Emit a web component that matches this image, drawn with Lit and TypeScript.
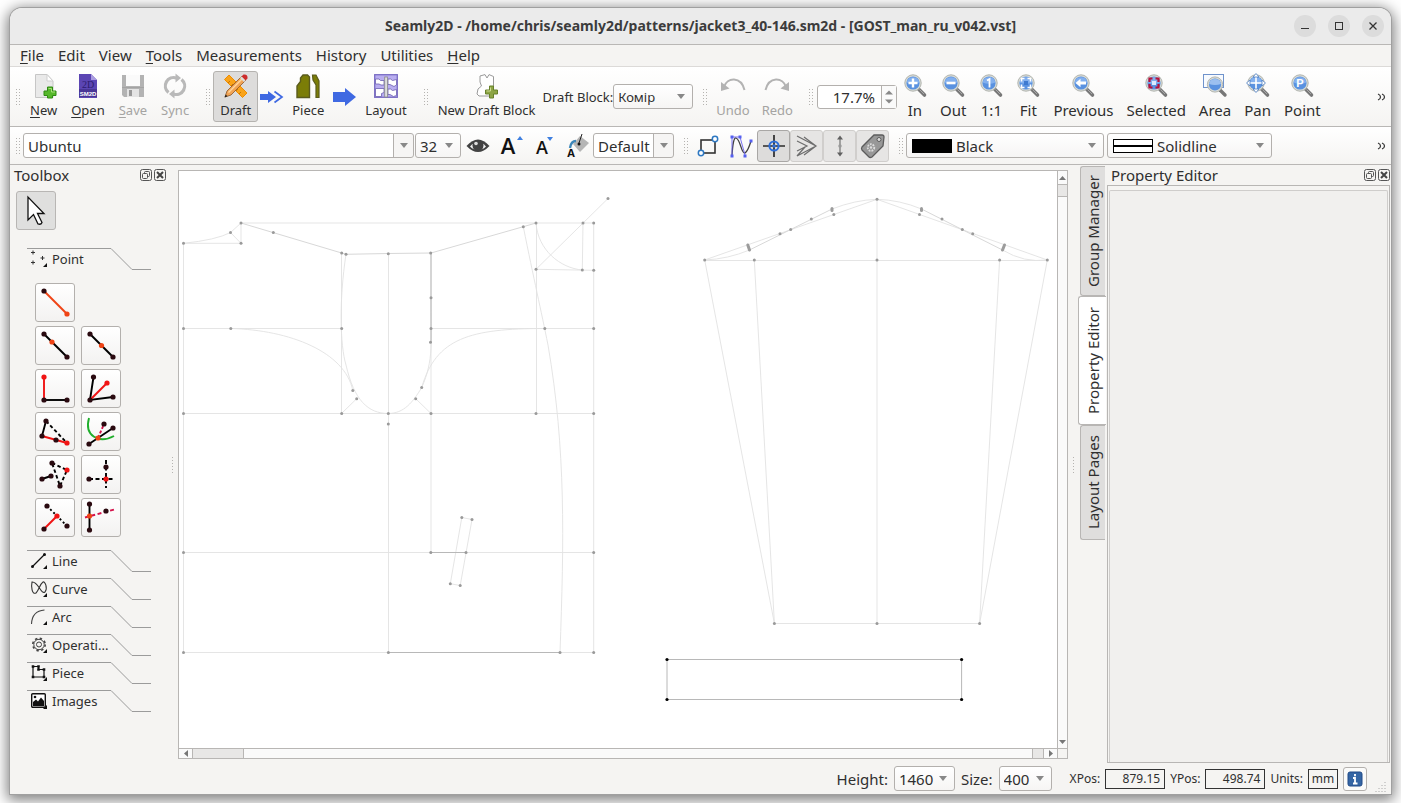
import { LitElement, html, svg, css, TemplateResult } from "lit";
import { customElement, state } from "lit/decorators.js";

type Glyph = TemplateResult;
interface Tool { label: string; icon: Glyph; key?: boolean; off?: boolean; on?: boolean }

const icon = (body: Glyph, size = 24) =>
  html`<svg class="icon" width=${size} height=${size} viewBox="0 0 ${size} ${size}" aria-hidden="true">${body}</svg>`;

/* ---------- toolbar glyphs ---------- */
const lensHandle = svg`
  <path d="M15.5 15 L21.5 21" stroke="#777" stroke-width="3.6" stroke-linecap="round"/>
  <path d="M16.5 15.5 L21 20" stroke="#a8a8a8" stroke-width="1"/>`;
const lens = (mark: Glyph) => icon(svg`
  ${lensHandle}
  <circle cx="10" cy="9" r="8.2" fill="#d9dcd6" stroke="#b2b5b0"/>
  <circle cx="10" cy="9" r="6.6" fill="#5a92e0"/>
  <path d="M3.6 8.5 a6.5 6.5 0 0 1 12.8 0 q-6.4 2.5 -12.8 0z" fill="#83b0ee"/>
  ${mark}`);

const newIcon = icon(svg`
  <path d="M3.500 .5 H15 L21 7 V23.500 H3.500z" fill="#e9e9e9" stroke="#c6c6c6"/>
  <path d="M15 .5 V7 H21z" fill="#fff" stroke="#cfcfcf"/>
  <path d="M15.500 13 h5 v4 h3.500 v4.500 h-3.500 v2.500 h-5 v-2.500 h-3.500 v-4.500 h3.500z" fill="#56b82a" stroke="#2f8a12"/>
  <path d="M16.500 14.500 h3 v3.500 h3.500" fill="none" stroke="#a5e079"/>`);
const openIcon = icon(svg`
  <path d="M3 0 H15 L21 6 V24 H3z" fill="#5b45b3"/>
  <path d="M15 0 V6 H21z" fill="#a99be0"/>
  <rect x="3" y="15" width="18" height="8" fill="#493696"/>
  <text x="12" y="14" text-anchor="middle" font-family="Liberation Serif, serif" font-size="10" fill="#2c1d70">2D</text>
  <text x="12" y="22" text-anchor="middle" font-family="Liberation Sans, sans-serif" font-weight="700" font-size="6" fill="#fff">SM2D</text>`);
const saveIcon = icon(svg`
  <path d="M1 1 H23 V23 H3 L1 21z" fill="#b3b3b3"/>
  <rect x="5" y="1" width="14" height="11" fill="#fafafa"/>
  <rect x="6" y="15" width="12" height="8" fill="#e4e4e4"/><rect x="8" y="16" width="3" height="6" fill="#999"/>
  <path d="M1 13.500 h22" stroke="#a3a3a3"/>`);
const syncIcon = icon(svg`
  <path d="M5.500 18.500 A8.400 8.400 0 0 1 13.500 4" fill="none" stroke="#b9b9b9" stroke-width="3.200"/>
  <path d="M18.500 5.500 A8.400 8.400 0 0 1 10.500 20" fill="none" stroke="#b9b9b9" stroke-width="3.200"/>
  <path d="M12.500 -.5 L18 4 L12.500 8.500z M11.500 24.500 L6 20 L11.500 15.500z" fill="#b9b9b9"/>`);
const draftIcon = icon(svg`
  <path d="M5 1 L23 19 L18.500 23.500 L.5 5.500z" fill="#f9a31a" stroke="#ee8d00"/>
  <path d="M4 9 l2 -2 M7 12 l2 -2 M12 17 l2 -2 M15 20 l2 -2" stroke="#b96d00" stroke-width=".8"/>
  <path d="M1 23 L3 17 L18 2 L22 6 L7 21z" fill="#f0a355" stroke="#8b5526" stroke-width=".8"/>
  <path d="M4.500 18.500 L19 4" stroke="#ffd79e" stroke-width="1.500"/>
  <path d="M17.500 2.500 L19.500 .5 Q24 0 23.500 4.500 L21.500 6.500z" fill="#cc2b2b"/>
  <path d="M16 4 l1.500-1.500 l4 4 L20 8z" fill="#dcdcdc"/>
  <path d="M.5 23.500 L1.700 20.500 L3.500 22.300z" fill="#222"/>`);
const pieceIcon = icon(svg`
  <path d="M1 23.500 V12 L4.500 7.500 V4 L7 1 H11.500 L13.500 3 V23.500z" fill="#7b7d07" stroke="#5a5b1d" stroke-width="1.400"/>
  <path d="M16.500 1 H20 L23 7 V23.500 H20 V11 L17 6z" fill="#7b7d07" stroke="#5a5b1d" stroke-width="1.200"/>`);
const layoutIcon = icon(svg`
  <rect x=".7" y=".7" width="22.600" height="22.600" fill="#b9aef0" stroke="#7a6dc4" stroke-width="1.300"/>
  <path d="M1.500 5 H5 L6.500 6.500 H10 V11 H7 L5 10 H1.500z M1.500 14.500 H10 V18.500 L7.500 19.500 V22.500 H1.500z M14 5 H16.500 L18.500 6.500 L22.500 5.500 V11 L20 12.500 L16 10.500 H14z M14 15 H16.500 L18.500 16.500 L22.500 15.500 V21.500 L19.500 22.500 L16 20.500 H14z" fill="#fff" stroke="#6c5fb0" stroke-width=".8"/>
  <rect x="10.700" y="3" width="2.800" height="20" fill="#ddd" stroke="#888" stroke-width=".8"/>`);
const blockIcon = icon(svg`
  <path d="M5 2 L10 .6 L12 4 L14 .6 L18.500 2.500 L18.500 13 V22 L4 22 L2 20 L3 15 L6.500 12 L5 8z" fill="#fff" stroke="#9a9a9a"/>
  <path d="M14.500 12 h4 v4 h4 v4 h-4 v4 h-4 v-4 h-4 v-4 h4z" fill="#8da545" stroke="#66802a"/>
  <path d="M15.500 13.500 v3.500 h-4" fill="none" stroke="#cddc94"/>`);
const undoIcon = icon(svg`
  <path d="M3 13 C6 3 20 2 23.500 16" fill="none" stroke="#b3b3b3" stroke-width="2"/>
  <path d="M0 8 V17 L8.500 14.500z" fill="#b3b3b3"/>`);
const redoIcon = icon(svg`
  <path d="M21 13 C18 3 4 2 .5 16" fill="none" stroke="#b3b3b3" stroke-width="2"/>
  <path d="M24 8 V17 L15.500 14.500z" fill="#b3b3b3"/>`);

const zoomTools: Tool[] = [
  { label: "In", icon: lens(svg`<path d="M10 4.500 v9 M5.500 9 h9" stroke="#fff" stroke-width="2.400"/>`) },
  { label: "Out", icon: lens(svg`<path d="M5.500 9 h9" stroke="#fff" stroke-width="2.600"/>`) },
  { label: "1:1", icon: lens(svg`<path d="M8 6.500 l2.500 -1.500 v8.500" fill="none" stroke="#fff" stroke-width="1.800"/>`) },
  { label: "Fit", icon: lens(svg`<path d="M5.500 7.500 V4.500 h3 M11.500 4.500 h3 v3 M14.500 10.500 v3 h-3 M8.500 13.500 h-3 v-3" fill="none" stroke="#fff" stroke-width="1.600"/><rect x="8" y="7" width="4" height="4" fill="#3f7ad0"/>`) },
  { label: "Previous", icon: lens(svg`<path d="M4.500 9 L9.500 4.800 V7.500 H15 v3 H9.500 V13.200z" fill="#fff"/>`) },
  { label: "Selected", icon: lens(svg`<path d="M5.500 8 V4.500 h3 M11.500 4.500 h3 V8 M14.500 10 v3.500 h-3 M8.500 13.500 h-3 V10" fill="none" stroke="#b8123a" stroke-width="2.200"/><rect x="8" y="7" width="4" height="4" fill="#dcebff"/>`) },
  { label: "Area", icon: icon(svg`
      <rect x=".5" y=".5" width="20" height="13" fill="#f7fafe" stroke="#6f93cc"/>
      <path d="M17 16 L22 21" stroke="#777" stroke-width="3.400" stroke-linecap="round"/>
      <circle cx="12" cy="10.500" r="7.600" fill="#d9dcd6" stroke="#b2b5b0"/><circle cx="12" cy="10.500" r="6.100" fill="#5a92e0"/>
      <path d="M6 10 a6.100 6.100 0 0 1 12 0 q-6 2 -12 0z" fill="#9cc0f0"/>`) },
  { label: "Pan", icon: lens(svg`<path d="M10 1 v16 M2 9 h16" stroke="#fff" stroke-width="1.600"/><path d="M10 -.5 l3 3.500 h-6z M10 18.500 l3 -3.500 h-6z M.5 9 l3.500 -3 v6z M19.500 9 l-3.500 -3 v6z" fill="#fff" stroke="#4d7fc4" stroke-width=".8"/>`) },
  { label: "Point", icon: lens(svg`<text x="10" y="13" text-anchor="middle" font-family="Liberation Sans, sans-serif" font-weight="700" font-size="11" fill="#fff">P</text>`) },
];

const textTools: Tool[] = [
  { label: "Show point names", icon: icon(svg`
      <path d="M.5 12 Q12 -1 23.500 12 Q12 24 .5 12z" fill="#424242"/><path d="M4 12.500 Q12 3 20 12.500 Q12 20 4 12.500z" fill="#f6f6f6"/>
      <circle cx="12" cy="11.500" r="5.500" fill="#424242"/><circle cx="10" cy="9.500" r="1.800" fill="#ddd"/>`) },
  { label: "Increase text size", icon: icon(svg`
      <text x="9" y="20" text-anchor="middle" font-family="Open Sans, sans-serif" font-weight="600" font-size="22" fill="#111">A</text>
      <path d="M18 6 h6 l-3 -4z" fill="#3f7fe0"/>`) },
  { label: "Decrease text size", icon: icon(svg`
      <text x="10" y="20" text-anchor="middle" font-family="Open Sans, sans-serif" font-weight="600" font-size="18" fill="#111">A</text>
      <path d="M15 3 h6 l-3 4z" fill="#3f7fe0"/>`) },
  { label: "Text colour", icon: icon(svg`
      <path d="M8 10 L15 2 L24 9 L15 18z" fill="#b5b5b5"/><path d="M17 0 L14 9" stroke="#222"/><circle cx="14" cy="10" r="1.500" fill="#111"/>
      <path d="M11 7 Q6 7 5 14" fill="none" stroke="#3c86b9" stroke-width="2.400"/>
      <text x="6" y="23" text-anchor="middle" font-family="Open Sans, sans-serif" font-weight="700" font-size="11" fill="#111">A</text>`) },
];

const viewTools: Tool[] = [
  { label: "Fill", icon: icon(svg`
      <rect x="5" y="6" width="14" height="13" fill="none" stroke="#333" stroke-width="1.600"/>
      <circle cx="19" cy="5" r="2.700" fill="#fff" stroke="#2e78c2" stroke-width="1.500"/><circle cx="5" cy="19" r="2.700" fill="#fff" stroke="#2e78c2" stroke-width="1.500"/>`) },
  { label: "Curve details", icon: icon(svg`
      <path d="M3 22 Q4 3 7 4 C12 6 12 20 16 19 Q19 17 22 7" fill="none" stroke="#404040" stroke-width="1.300"/>
      <path d="M3 3 H11 L16 21 M3 3 V21" fill="none" stroke="#6b63ee" stroke-width=".9"/>
      <path d="M1.500 1.500 h3 v3 h-3z M9.500 1.500 h3 v3 h-3z M20.500 5.500 h3 v3 h-3z M1.500 20.500 h3 v3 h-3z M14.500 20.500 h3 v3 h-3z" fill="#5560f0"/>`) },
  { label: "Origin", on: true, icon: icon(svg`
      <path d="M12 1 V23 M1 12 H23" stroke="#2b2b2b" stroke-width="1.700"/><circle cx="12" cy="12" r="4.600" fill="none" stroke="#2e6fdb" stroke-width="2"/><circle cx="12" cy="12" r="1.800" fill="#2e6fdb"/>`) },
  { label: "Wireframe", on: true, icon: icon(svg`
      <path d="M2 2 L21 12 L2 22 L10 13 M2 7 L12 12 L2 17 M9 3 L21 12 L9 21" fill="none" stroke="#6d6d6d" stroke-width="1.200"/>`) },
  { label: "Grain lines", on: true, icon: icon(svg`
      <path d="M12 4 V20" stroke="#888" stroke-width="1.500"/><path d="M12 1.500 l3 4 h-6z M12 22.500 l3 -4 h-6z" fill="#606060"/><circle cx="12" cy="12" r="1.700" fill="#999"/>`) },
  { label: "Labels", on: true, icon: icon(svg`
      <path d="M13 1 H21 Q23 1 23 3 L22 12 L11 23 Q9 24 8 23 L1 16 Q0 14.500 1 13z" fill="#989898" stroke="#5c5c5c" stroke-width="1.300"/>
      <circle cx="18" cy="5.500" r="2" fill="#ddd" stroke="#5c5c5c"/><circle cx="10" cy="13.500" r="3.300" fill="none" stroke="#ddd" stroke-width="1.800" stroke-dasharray="1.800 1"/><circle cx="10" cy="13.500" r="1.200" fill="#ddd"/>`) },
];

/* ---------- toolbox glyphs (28 x 28) ---------- */
const dot = (x: number, y: number, c = "#2a0a10") => svg`<circle cx=${x} cy=${y} r="2.600" fill=${c}/>`;
const seg = (d: string, c = "#000", dash = "") => svg`<path d=${d} fill="none" stroke=${c} stroke-width="1.900" stroke-dasharray=${dash}/>`;
const RED = "#f01414", ORANGE = "#ef4416", PINK = "#d4124a";
const pointTools: (Tool | null)[] = [
  { label: "Point at distance and angle", icon: icon(svg`${seg("M3 2 L26 25", ORANGE)}${dot(3, 2)}${dot(26, 25, ORANGE)}`, 28) },
  null,
  { label: "Point on line", icon: icon(svg`${seg("M3 2 L26 25")}${dot(3, 2)}${dot(26, 25)}${dot(11, 10, ORANGE)}`, 28) },
  { label: "Midpoint", icon: icon(svg`${seg("M3 2 L26 25")}${dot(3, 2)}${dot(26, 25)}${dot(14.5, 13.5, ORANGE)}`, 28) },
  { label: "Perpendicular point", icon: icon(svg`${seg("M3 2 V25", RED)}${seg("M3 25 H26")}${dot(3, 2, RED)}${dot(3, 25)}${dot(26, 25)}`, 28) },
  { label: "Bisector", icon: icon(svg`${seg("M6.500 2 L3 25 L26 22")}${seg("M3 25 L20 8", RED)}${dot(6.5, 2)}${dot(3, 25)}${dot(26, 22)}${dot(20, 8, RED)}`, 28) },
  { label: "Shoulder point", icon: icon(svg`${seg("M5 3 L1 18")}${seg("M5 3 L26 25", "#000", "3.500 2.500")}${seg("M1 18 L26 25", RED)}${dot(5, 3)}${dot(1, 18)}${dot(15, 22)}${dot(26, 25, RED)}`, 28) },
  { label: "Arc and line", icon: icon(svg`<path d="M2 0 C-3 18 12 26 27 18" fill="none" stroke="#1fae2b" stroke-width="1.900"/>${seg("M2 26 L26 10")}${seg("M11 20 L17 6", PINK, "3 2")}${dot(2, 26)}${dot(26, 10)}${dot(17, 6)}${dot(11, 20, ORANGE)}`, 28) },
  { label: "Triangle", icon: icon(svg`${seg("M1 18 L10 15")}${seg("M11 2 L26 9 L19 25z", "#000", "3.500 2.500")}${dot(1, 18)}${dot(10, 15)}${dot(11, 2)}${dot(19, 25)}${dot(26, 9, RED)}`, 28) },
  { label: "Intersect XY", icon: icon(svg`${seg("M2 18 H28", "#000", "4 2.500")}${seg("M19 -1 V27", "#000", "4 2.500")}${dot(2, 18)}${dot(19, 6)}${dot(19, 18, RED)}`, 28) },
  { label: "Perpendicular to line", icon: icon(svg`${seg("M6 2 L26 22", "#000", "2 2.500")}${seg("M3 25 L16 12", RED)}${dot(6, 2)}${dot(26, 22)}${dot(3, 25)}${dot(16, 12, RED)}`, 28) },
  { label: "Axis intersection", icon: icon(svg`${seg("M2.500 0 V26")}${seg("M-2 13.500 L29 5", PINK, "4 2.500")}${dot(2.5, 0)}${dot(2.5, 26)}${dot(19, 7)}${dot(2.5, 12, ORANGE)}`, 28) },
];

const corner = svg`<path d="M16 16 v-4 l-4 4z" fill="#111"/>`;
const sections: { label: string; icon: Glyph }[] = [
  { label: "Point", icon: icon(svg`<path d="M2 -.5 v4 M0 1.500 h4 M2 9.500 v4 M0 11.500 h4 M11.500 5 v4 M9.500 7 h4" stroke="#333"/>${corner}`, 16) },
  { label: "Line", icon: icon(svg`<path d="M1.500 13.500 L13.500 1.500" stroke="#111" stroke-width="1.300"/><circle cx="1.500" cy="13.500" r="1.500" fill="#111"/><circle cx="13.500" cy="1.500" r="1.500" fill="#111"/>${corner}`, 16) },
  { label: "Curve", icon: icon(svg`<path d="M1 1 C7 0 10 14 14 11 C17 7 14 0 12 1 C9 3 8 9 5 12 C1 14 0 6 1 1z" fill="none" stroke="#333" stroke-width="1.100"/>${corner}`, 16) },
  { label: "Arc", icon: icon(svg`<path d="M.5 15 Q1 2 13.500 1" fill="none" stroke="#444" stroke-width="1.100"/>${corner}`, 16) },
  { label: "Operati...", icon: icon(svg`<circle cx="8" cy="7.500" r="6.200" fill="none" stroke="#444" stroke-width="1.600" stroke-dasharray="2.400 2.470"/><circle cx="8" cy="7.500" r="5.200" fill="none" stroke="#444"/><circle cx="8" cy="7.500" r="2.500" fill="none" stroke="#444"/>${corner}`, 16) },
  { label: "Piece", icon: icon(svg`<path d="M2 1.500 H7.500 V4.500 H13 V12 H2z" fill="none" stroke="#111" stroke-width="1.200"/><path d="M.7 .2 h2.600 v2.600 h-2.600z M6.200 .2 h2.600 v2.600 h-2.600z M11.700 3.200 h2.600 v2.600 h-2.600z M6.200 3.200 h2.600 v2.600 h-2.600z M.7 10.700 h2.600 v2.600 h-2.600z M11.700 10.700 h2.600 v2.600 h-2.600z" fill="#111"/>${corner}`, 16) },
  { label: "Images", icon: icon(svg`<rect x=".7" y=".7" width="13.600" height="13.600" rx="1" fill="#fff" stroke="#111" stroke-width="1.400"/><path d="M2 13 V9 L5 6.500 L7 8.500 L10 4.500 L13 8 V13z" fill="#111"/><circle cx="4" cy="4" r="1.300" fill="#111"/>${corner}`, 16) },
];

/* ---------- pattern drawing ---------- */
const faintLines = [
  "M183.500 243.300 V652.500 H593.700 V223 M241 223 H593.700 M183.500 243.300 H241 V223 L230.500 232.500 L241 243.300",
  "M183.500 243.300 Q216 240 230.500 232.500",
  "M183.500 328.500 H341.700 M431 328.500 H593.700 M183.500 413.500 H593.700 M183.500 552.500 H593.700",
  "M388.500 253.500 V652.500 M341.500 253 V413.500 L356.700 398.700 M431 253 V552.500 M431 413.500 L415.700 398.700",
  "M536.500 223 V413.500 M536 223 C538 250 560 268 582.300 270 M583 223 L582.300 270 M536 269.300 L593.700 270.300 M536 269.300 L608 198.500",
  "M346 254.300 C339 300 340 345 346 365 C354 400 368 413.500 388.300 413.500 C404 413.500 413 402 421.700 387.500 C434 360 431 342 431 297",
  "M230.800 328.500 C290 330 345 352 352.800 390.500 M421.700 387.500 C436 338 470 328.500 544.800 328.500",
  "M523.300 226.700 C534 280 541 310 548 345 C566 450 564 540 560 652.500",
  "M461.800 517.500 L472 519.500 L460.200 585.500 L450.300 583.700z",
  "M877 199.300 V623.500 M704.700 260.500 H1047.300 M704.700 260 L774.400 623.500 H979.600 L1047.300 260 M754.300 260 L774.400 623.500 M999.600 260 L979.600 623.500",
  "M704.700 260 L877 199.300 L1047.300 260 M704.700 260 Q728 259 749.500 250 M832 209 Q855 200 877 199.300 Q900 200 921.500 209 M1002.500 250 Q1024 263 1047.300 260",
];
const midLines = [
  "M241 223 L346 254.300 L388.300 253.500 L431 253 L523.300 226.700 L536 223",
  "M749.500 250 L832 209 M921.500 209 L1002.500 250",
];
const darkLines = ["M431 253 V342", "M431 552.500 H466", "M388.400 652.500 H560"];
const notches = ["M832 208.500 V210.500", "M921.500 208.500 V210.500", "M747.800 245 L749.500 250", "M1004.500 245 L1002.500 250"];
const points: [number, number][] = [
  [183.5, 243.3], [241, 223], [230.5, 232.5], [241, 243.3], [273.3, 232.5], [341.7, 253], [346, 254.3], [388.3, 253.7],
  [430.7, 253], [523.3, 226.7], [536, 223], [583, 223], [593.7, 223], [608, 198.5], [536, 269.3], [582.3, 270],
  [593.7, 270.3], [431, 297.7], [183.5, 328.5], [230.8, 328.5], [341.7, 328.5], [431, 328.5], [544.8, 328.5],
  [593.7, 328.5], [430.5, 342.3], [352.8, 390.5], [356.7, 398.7], [421.7, 387.5], [415.7, 398.7], [183.5, 413.5],
  [341.7, 413.5], [388.3, 413.5], [431, 413.5], [536, 413.5], [593.7, 413.5], [388.3, 424], [461.8, 517.5],
  [472, 519.5], [430.8, 552.5], [466, 552.5], [450.3, 583.7], [460.2, 585.5], [593.7, 552.5], [183.5, 552.5],
  [183.5, 652.5], [388.4, 652.5], [560, 652.5], [593.7, 652.5], [877, 199.3], [704.7, 260], [754.3, 260], [877, 260],
  [999.6, 260], [1047.3, 260], [833.8, 214.5], [811.3, 219], [790.7, 229.5], [780, 233.7],
  [919.5, 214.5], [942, 219], [962.3, 229.5], [972.7, 233.7], [774.4, 623.5], [877, 623.5], [979.6, 623.5],
];
const collar: [number, number][] = [[667, 659.5], [961.6, 659.5], [667, 699.5], [961.6, 699.5]];

const floatIcon = html`<svg width="12" height="12" viewBox="0 0 12 12" aria-hidden="true"><rect x=".5" y=".5" width="11" height="11" rx="2" fill="none" stroke="#555"/><rect x="4.500" y="2.500" width="5" height="5" rx="1" fill="none" stroke="#555"/><rect x="2.500" y="4.500" width="5" height="5" rx="1" fill="#f5f4f2" stroke="#555"/></svg>`;
const closeIcon = html`<svg width="12" height="12" viewBox="0 0 12 12" aria-hidden="true"><rect x=".5" y=".5" width="11" height="11" rx="2" fill="none" stroke="#555"/><path d="M3 3 L9 9 M9 3 L3 9" stroke="#444" stroke-width="2"/></svg>`;

@customElement("app-root")
export class AppRoot extends LitElement {
  @state() private tab = "Property Editor";

  static styles = css`
    :host { display: block; min-height: 100vh; box-sizing: border-box; padding: 8px 10px 9px; background: #fff; overflow: hidden;
      font: 15px/20px "Noto Sans", sans-serif; color: #2f2f2f; }
    *, *::before, *::after { box-sizing: border-box; }
    svg { display: block; flex: none; overflow: visible; }
    button, select, input { font: inherit; color: inherit; margin: 0; }
    button { border: 0; background: none; padding: 0; }
    .window { display: flex; flex-direction: column; height: calc(100vh - 17px); border-radius: 12px 12px 0 0; background: #f5f4f2;
      box-shadow: 0 0 0 1px #a0a0a0, 0 3px 14px 3px rgba(0,0,0,.5); }
    .title { display: grid; grid-template-columns: 100px 1fr 100px; align-items: center; height: 37px; flex: none; border-bottom: 1px solid #b9b7b5;
      background: #ebebeb; border-radius: 12px 12px 0 0; }
    .title h1 { grid-column: 2; margin: 0; font-size: 14px; line-height: 20px; font-weight: 700; text-align: center; color: #3c3c3c; white-space: nowrap; }
    .winbtns { display: flex; gap: 12px; justify-content: flex-end; padding-right: 7px; }
    .winbtn { flex: none; width: 22px; height: 22px; border-radius: 50%; background: #dcdcdc; display: grid; place-items: center; }
    .menu { display: flex; gap: 14px; padding: 0 10px; height: 22px; flex: none; border-bottom: 1px solid #dcdad8; line-height: 21px; }
    .menu button { line-height: 21px; }
    u { text-underline-offset: 2px; }
    .bar { display: flex; align-items: center; flex: none; border-bottom: 1px solid #b9b7b5; padding: 0 4px 0 5px;
      background: linear-gradient(#ffffff, #f5f4f2); }
    .main-bar { height: 60px; }
    .prop-bar { height: 38px; }
    .grip { flex: none; width: 5px; height: 17px; margin: 0 3px 0 9px; background: radial-gradient(circle, #b5b3b0 34%, transparent 40%) 0 0 / 3px 3px; }
    .grip:first-child { margin-left: 0; }
    .tool { display: flex; flex-direction: column; align-items: center; gap: 2px; flex: none; min-width: 32px; height: 51px; padding: 2px 6px 0;
      border: 1px solid transparent; border-radius: 3px; font-size: 13px; line-height: 20px; white-space: nowrap; }
    .group { display: flex; }
    .group .tool { padding: 2px 5px 0; }
    .zoom { gap: 1px; }
    .zoom .tool { font-size: 15px; }
    .flow { margin: 0 1px; }
    .pressed { background: #dddcdb; border-color: #b5b3b0; }
    .off { color: #a5a4a2; }
    .mini { display: grid; place-items: center; flex: none; width: 33px; height: 32px; border: 1px solid transparent; border-radius: 3px; }
    .mini.pressed { background: #e6e5e4; border-color: #d0cecc; }
    .mini.first { background: #dddcdb; border-color: #a9a7a5; }
    .combo { display: grid; flex: none; height: 25px; border: 1px solid #b3b0ad; border-radius: 3px; background: linear-gradient(#fff, #f6f5f4); overflow: hidden; }
    .combo > *, .combo::after { grid-area: 1 / 1; }
    .combo select { appearance: none; border: 0; background: transparent; width: 100%; height: 23px; padding: 0 4px; line-height: 20px; outline: 0; }
    .combo::after { content: ""; justify-self: end; align-self: center; margin-right: 7px; border: 4px solid transparent; border-top: 5px solid #888; border-bottom: 0; pointer-events: none; }
    .combo.split { background: linear-gradient(90deg, #fff calc(100% - 20px), #b3b0ad calc(100% - 20px), #b3b0ad calc(100% - 19px), #f6f5f4 calc(100% - 19px)); }
    .combo.split::after { margin-right: 5px; }
    .combo.swatched { grid-template-columns: auto 1fr; align-items: center; padding-left: 5px; }
    .combo.swatched > select, .combo.swatched::after { grid-area: 1 / 2; }
    .w-font { width: 391px; } .w-size { width: 46px; margin-left: 1px; } .w-default { width: 81px; }
    .w-color { width: 198px; } .w-line { width: 165px; margin-left: 3px; }
    .w-block { width: 80px; font-size: 13px; } .w-h { width: 61px; margin: 0 1px; } .w-s { width: 53px; margin: 0 1px; }
    .small { font-size: 13px; white-space: nowrap; }
    .more { margin-left: auto; width: 12px; display: grid; place-items: center; flex: none; }
    .spin { display: grid; grid-template-columns: 1fr 15px; flex: none; width: 80px; height: 24px; margin-left: 1px; border: 1px solid #b3b0ad; border-radius: 3px; background: #fff; }
    .spin input { border: 0; padding: 0 6px 0 0; width: 100%; min-width: 0; text-align: right; background: none; outline: 0; height: 22px; }
    .steps { border-left: 1px solid #b3b0ad; display: grid; place-items: center; background: #fafafa; }
    .body { flex: 1; min-height: 0; display: flex; }
    .dock { flex: none; width: 156px; display: flex; flex-direction: column; align-items: flex-start; }
    .head { display: flex; align-items: center; gap: 2px; width: 100%; height: 20px; flex: none; }
    .head h2 { font: inherit; margin: 0 auto 0 4px; }
    .arrow-tool { width: 40px; height: 39px; margin: 6px 6px 18px; display: grid; place-items: center; border: 1px solid #b8b6b4; border-radius: 3px; background: #dfdfde; }
    .section { display: grid; width: 124px; height: 28px; margin-left: 17px; padding: 0; text-align: left; }
    .section > * { grid-area: 1 / 1; }
    .section .label { display: flex; align-items: center; gap: 5px; height: 22px; padding-left: 4px; font-size: 13px; line-height: 20px; }
    .tools { display: grid; grid-template-columns: 40px 40px; grid-auto-rows: 39px; gap: 4px 6px; margin: 7px 0 13px 25px; }
    .tools button { display: grid; place-items: center; border: 1px solid #b3b0ad; border-radius: 3px; background: linear-gradient(#fff, #f3f2f1); }
    .splitter { flex: none; width: 12px; display: grid; place-items: center; }
    .splitter.right { width: 10px; }
    .splitter::before { content: ""; width: 3px; height: 17px; background: radial-gradient(circle, #b5b3b0 34%, transparent 40%) 0 0 / 3px 3px; }
    .view { flex: 1; min-width: 0; margin: 5px 0; display: grid; grid-template: minmax(0, 1fr) 10px / minmax(0, 1fr) 10px; border: 1px solid #b8b6b4; background: #fff; }
    .view > svg { width: 100%; height: 100%; overflow: hidden; }
    .vbar { border-left: 1px solid #b8b6b4; display: flex; flex-direction: column; align-items: center; background: #fafafa; }
    .hbar { border-top: 1px solid #b8b6b4; display: flex; align-items: center; background: #fafafa; }
    .knob { background: #e8e7e6; border: 1px solid #b8b6b4; }
    .vbar .knob { width: 100%; height: 13px; border-width: 1px 0; }
    .hbar .knob { height: 100%; width: 52px; border-width: 0 1px; }
    .vbar .cell, .hbar .cell { display: grid; place-items: center; width: 13px; height: 13px; flex: none; }
    .hbar .cell { height: 9px; }
    .rest { flex: 1; }
    .hbar .knob.tail { width: 12px; }
    .cornerbox { border: solid #b8b6b4; border-width: 1px 0 0 1px; background: #f5f4f2; }
    .tabs { flex: none; width: 28px; padding-top: 1px; display: flex; flex-direction: column; align-items: flex-end; }
    .tabs button { writing-mode: vertical-rl; transform: rotate(180deg); width: 25px; height: 130px; margin-right: 1px; flex: none; text-align: center; line-height: 20px;
      background: #dfdedd; border: 1px solid #b8b6b4; border-left: 0; border-radius: 0 3px 3px 0; white-space: nowrap; }
    .tabs button.last { height: 115px; }
    .tabs button.current { width: 28px; height: 129px; margin-right: 0; background: #fff; }
    .props { flex: none; width: 285px; display: flex; flex-direction: column; padding: 0 1px 1px 1px; }
    .panel { flex: 1; border: 1px solid #b8b6b4; padding: 4px 1px 0 1px; display: flex; }
    .sheet { flex: 1; border: 1px solid #cfcdcb; border-bottom: 0; border-radius: 2px 2px 0 0; background: #f1f0ee; }
    .status { flex: none; height: 30px; display: flex; align-items: center; justify-content: flex-end; gap: 5px; padding: 0 4px 1px 0; }
    .status .fine { font-size: 12px; }
    .status output { border: 1px solid #333; width: 60px; height: 20px; font-size: 12px; line-height: 18px; text-align: right; padding: 0 4px; }
    .status output.unit { width: 30px; padding: 0; text-align: center; }
    .status .spaced { margin-left: 12px; }
    .info { width: 24px; height: 24px; border: 1px solid #b3b0ad; border-radius: 3px; display: grid; place-items: center; background: #fbfbfa; }
    .resize { align-self: flex-end; margin-left: 3px; }
  `;

  private tool(t: Tool) {
    const text = t.key ? html`<span><u>${t.label[0]}</u>${t.label.slice(1)}</span>` : html`<span>${t.label}</span>`;
    return html`<button class="tool ${t.on ? "pressed" : ""} ${t.off ? "off" : ""}" ?disabled=${!!t.off}>${t.icon}${text}</button>`;
  }

  private combo(cls: string, id: string, value: string, swatch: unknown = "", label = "") {
    return html`<span class="combo ${cls}">${swatch}${label
      ? html`<select id=${id} aria-label=${label}><option>${value}</option></select>`
      : html`<select id=${id}><option>${value}</option></select>`}</span>`;
  }

  private section(i: number) {
    const s = sections[i];
    return html`<button class="section">
      <svg width="124" height="22" aria-hidden="true"><path d="M0 .5 H84 L105 21.500 H124" fill="none" stroke="#9b9b9b"/></svg>
      <span class="label">${s.icon}<span>${s.label}</span></span></button>`;
  }

  private chevrons() {
    return html`<button class="more" aria-label="More"><svg width="9" height="8" viewBox="0 0 9 8"><path d="M1 1 Q3.500 2 3.500 4 Q3.500 6 1 7 M5 1 Q7.500 2 7.500 4 Q7.500 6 5 7" fill="none" stroke="#333" stroke-width="1.200"/></svg></button>`;
  }

  private head(title: string) {
    return html`<div class="head"><h2>${title}</h2><button aria-label="Float">${floatIcon}</button><button aria-label="Close">${closeIcon}</button></div>`;
  }

  private drawing() {
    return html`<svg role="img" aria-label="Draft block">
      <g transform="translate(-179 -171)" fill="none">
        ${faintLines.map(d => svg`<path d=${d} stroke="#e2e2e2" stroke-width=".9"/>`)}
        ${midLines.map(d => svg`<path d=${d} stroke="#d8d8d8"/>`)}
        ${darkLines.map(d => svg`<path d=${d} stroke="#b8b8b8"/>`)}
        ${notches.map(d => svg`<path d=${d} stroke="#9c9c9c" stroke-width="3" stroke-linecap="round"/>`)}
        ${points.map(([x, y]) => svg`<circle cx=${x} cy=${y} r="1.500" fill="#9a9a9a"/>`)}
        <path d="M667 659.500 H961.600 V699.500 H667z" stroke="#b8b8b8"/>
        ${collar.map(([x, y]) => svg`<circle cx=${x} cy=${y} r="1.600" fill="#000"/>`)}
      </g></svg>`;
  }

  render() {
    const menu = [["File", 1], ["Edit", 0], ["View", 0], ["Tools", 1], ["Measurements", 0], ["History", 0], ["Utilities", 0], ["Help", 1]] as [string, number][];
    const tabs = ["Group Manager", "Property Editor", "Layout Pages"];
    return html`<div class="window">
      <header class="title">
        <h1>Seamly2D - /home/chris/seamly2d/patterns/jacket3_40-146.sm2d - [GOST_man_ru_v042.vst]</h1>
        <div class="winbtns">
          <button class="winbtn" aria-label="Minimize"><svg width="10" height="10"><path d="M1 7.500 h8" stroke="#333"/></svg></button>
          <button class="winbtn" aria-label="Maximize"><svg width="10" height="10"><rect x="1.500" y="1.500" width="7" height="7" fill="none" stroke="#333"/></svg></button>
          <button class="winbtn" aria-label="Close"><svg width="10" height="10"><path d="M1.500 1.500 l7 7 M8.500 1.500 l-7 7" stroke="#333" stroke-width="1.300"/></svg></button>
        </div>
      </header>
      <nav class="menu">${menu.map(([m, k]) => html`<button>${k ? html`<u>${m[0]}</u>${m.slice(1)}` : m}</button>`)}</nav>

      <div class="bar main-bar">
        <span class="grip"></span>
        ${this.tool({ label: "New", icon: newIcon, key: true })}
        ${this.tool({ label: "Open", icon: openIcon, key: true })}
        ${this.tool({ label: "Save", icon: saveIcon, key: true, off: true })}
        ${this.tool({ label: "Sync", icon: syncIcon, off: true })}
        <span class="grip"></span>
        ${this.tool({ label: "Draft", icon: draftIcon, on: true })}
        <svg class="flow" width="25" height="14" viewBox="0 0 25 14" aria-hidden="true"><path d="M1 4 H9 V1 L17 7 L9 13 V10 H1z" fill="#3f69e2"/><path d="M15.500 1.500 L23 7 L15.500 12.500" fill="none" stroke="#3f69e2" stroke-width="1.700"/></svg>
        ${this.tool({ label: "Piece", icon: pieceIcon })}
        <svg class="flow" width="25" height="18" viewBox="0 0 25 18" aria-hidden="true"><path d="M1 4 H13 V0 L24 9 L13 18 V14 H1z" fill="#3f69e2"/></svg>
        ${this.tool({ label: "Layout", icon: layoutIcon })}
        <span class="grip"></span>
        ${this.tool({ label: "New Draft Block", icon: blockIcon })}
        <label class="small" for="block">Draft Block:</label>
        ${this.combo("w-block", "block", "Комір")}
        <span class="grip"></span>
        <span class="group">
          ${this.tool({ label: "Undo", icon: undoIcon, off: true })}
          ${this.tool({ label: "Redo", icon: redoIcon, off: true })}
        </span>
        <span class="grip"></span>
        <span class="spin"><input aria-label="Zoom" value="17.7%"><span class="steps"><svg width="8" height="14"><path d="M0 4.500 h8 l-4 -4z M0 9.500 h8 l-4 4z" fill="#888"/></svg></span></span>
        <span class="group zoom">${zoomTools.map(t => this.tool(t))}</span>
        ${this.chevrons()}
      </div>

      <div class="bar prop-bar">
        <span class="grip"></span>
        ${this.combo("split w-font", "font", "Ubuntu", "", "Font")}
        ${this.combo("w-size", "font-size", "32", "", "Font size")}
        ${textTools.map(t => html`<button class="mini" aria-label=${t.label}>${t.icon}</button>`)}
        ${this.combo("split w-default", "label-style", "Default", "", "Label style")}
        <span class="grip"></span>
        ${viewTools.map((t, i) => html`<button class="mini ${t.on ? "pressed" : ""} ${i === 2 ? "first" : ""}" aria-label=${t.label}>${t.icon}</button>`)}
        <span class="grip"></span>
        ${this.combo("swatched w-color", "colour", "Black", html`<svg width="40" height="14"><rect width="40" height="14" fill="#000"/></svg>`, "Line colour")}
        ${this.combo("swatched w-line", "line-type", "Solidline", html`<svg width="40" height="14"><rect x=".5" y=".5" width="39" height="13" fill="#fff" stroke="#000"/><path d="M0 7 h40" stroke="#000" stroke-width="2"/></svg>`, "Line type")}
        ${this.chevrons()}
      </div>

      <main class="body">
        <aside class="dock">
          ${this.head("Toolbox")}
          <button class="arrow-tool" aria-label="Select"><svg width="18" height="30" viewBox="0 0 18 30"><path d="M1 1 V24 L6.500 18.500 L11 28 Q14 29 15 26.500 L10.500 17.500 H17z" fill="#fff" stroke="#111" stroke-width="1.300"/></svg></button>
          ${this.section(0)}
          <div class="tools">${pointTools.map(t => t ? html`<button aria-label=${t.label}>${t.icon}</button>` : html`<span></span>`)}</div>
          ${[1, 2, 3, 4, 5, 6].map(i => this.section(i))}
        </aside>
        <div class="splitter"></div>
        <section class="view">
          ${this.drawing()}
          <div class="vbar">
            <span class="cell"><svg width="7" height="4"><path d="M0 4 h7 l-3.500 -4z" fill="#777"/></svg></span><span class="knob"></span><span class="rest"></span>
            <span class="cell"><svg width="7" height="4"><path d="M0 0 h7 l-3.500 4z" fill="#777"/></svg></span>
          </div>
          <div class="hbar">
            <span class="cell"><svg width="4" height="7"><path d="M4 0 v7 l-4 -3.500z" fill="#777"/></svg></span><span class="knob"></span><span class="rest"></span><span class="knob tail"></span>
            <span class="cell"><svg width="4" height="7"><path d="M0 0 v7 l4 -3.500z" fill="#777"/></svg></span>
          </div>
          <div class="cornerbox"></div>
        </section>
        <div class="splitter right"></div>
        <div class="tabs" role="tablist">
          ${tabs.map((t, i) => html`<button role="tab" class="${t === this.tab ? "current" : ""} ${i === 2 ? "last" : ""}" @click=${() => (this.tab = t)}>${t}</button>`)}
        </div>
        <section class="props">${this.head(this.tab)}<div class="panel"><div class="sheet"></div></div></section>
      </main>

      <footer class="status">
        <label for="height">Height:</label>${this.combo("w-h", "height", "1460")}
        <label for="size">Size:</label>${this.combo("w-s", "size", "400")}
        <label class="fine spaced" for="xpos">XPos:</label><output id="xpos">879.15</output>
        <label class="fine" for="ypos">YPos:</label><output id="ypos">498.74</output>
        <label class="fine" for="units">Units:</label><output id="units" class="unit">mm</output>
        <button class="info" aria-label="Information"><svg width="16" height="16"><rect x="1" y="1" width="14" height="14" rx="2" fill="#3465a4" stroke="#204a87"/><path d="M8 3 v2.200 M6 7 h2 v5.500 M6 12.500 h4.500" stroke="#fff" stroke-width="1.800" fill="none"/></svg></button>
        <svg class="resize" width="12" height="12" viewBox="0 0 12 12" aria-hidden="true"><path d="M10 1 v10 M7 4 v8 M4 7 v4 M1 10 v2" stroke="#aaa" stroke-dasharray="1 2"/></svg>
      </footer>
    </div>`;
  }
}
